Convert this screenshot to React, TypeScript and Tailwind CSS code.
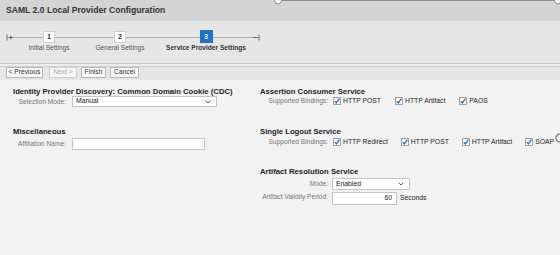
import React from "react"

const font = "font-['Liberation_Sans',Arial,sans-serif]"

function Chevron() {
  return (
    <svg width="6" height="4" viewBox="0 0 6 4" className="shrink-0">
      <path d="M0.8 0.8 L3 3 L5.2 0.8" fill="none" stroke="#555" strokeWidth="1" />
    </svg>
  )
}

function Select({ value, width, height }: { value: string; width: string; height: string }) {
  return (
    <div className={`${width} ${height} flex items-center justify-between bg-white border border-[#c4c4c4] pl-[3px] pr-[5px] text-[6.8px] text-[#222]`}>
      <span>{value}</span>
      <Chevron />
    </div>
  )
}

function Check({ label }: { label: string }) {
  return (
    <div className="flex items-center">
      <div className="w-[8px] h-[8px] bg-white border border-[#a0a0a0] flex items-center justify-center">
        <svg width="6" height="6" viewBox="0 0 6 6">
          <path d="M0.7 3.1 L2.3 4.9 L5.4 0.6" fill="none" stroke="#1a6fc9" strokeWidth="1.3" />
        </svg>
      </div>
      <span className="ml-[2px] text-[6.8px] text-[#222] whitespace-nowrap">{label}</span>
    </div>
  )
}

function Step({ n, label, active, w, ml }: { n: string; label: string; active?: boolean; w: string; ml: string }) {
  return (
    <div className={`${w} ${ml} flex flex-col items-center shrink-0`}>
      <div
        className={
          active
            ? "w-[13px] h-[13px] bg-[#1b74c5] text-white font-bold text-[6.5px] flex items-center justify-center"
            : "w-[12px] h-[12px] mt-[1px] bg-white border border-[#d2d2d2] text-[#222] font-bold text-[6.5px] flex items-center justify-center"
        }
      >
        {n}
      </div>
      <div className={`mt-[1px] leading-[8px] text-[6.6px] whitespace-nowrap ${active ? "font-bold text-[#333]" : "text-[#555]"}`}>
        {label}
      </div>
    </div>
  )
}

function Btn({ label, w, ml, disabled }: { label: string; w: string; ml: string; disabled?: boolean }) {
  return (
    <div
      className={`${w} ${ml} h-[11px] flex items-center justify-center bg-[#f7f7f7] border text-[6.7px] whitespace-nowrap ${
        disabled ? "border-[#d0d0d0] text-[#aaa]" : "border-[#b8b8b8] text-[#333]"
      }`}
    >
      {label}
    </div>
  )
}

export default function App() {
  return (
    <div className={`${font} relative w-[560px] h-[255px] overflow-hidden flex flex-col bg-[#f2f2f2]`}>
      {/* header */}
      <div className="h-[21px] bg-[#d4d4d4] flex items-center pl-[6px] text-[8.6px] font-bold text-[#333] shrink-0">
        SAML 2.0 Local Provider Configuration
      </div>

      {/* roadmap */}
      <div className="relative h-[42px] bg-[#e6e6e6] shrink-0">
        <div className="absolute left-[12px] w-[241px] top-[16px] h-px bg-[#b0b0b0]" />
        <svg className="absolute left-[6px] top-[13px]" width="7" height="7" viewBox="0 0 7 7">
          <path d="M1 0.5 V6.5" stroke="#666" strokeWidth="1" />
          <path d="M2.5 3.5 H6" stroke="#666" strokeWidth="1" />
          <path d="M4 1.8 L6.2 3.5 L4 5.2" fill="none" stroke="#666" strokeWidth="1" />
        </svg>
        <svg className="absolute left-[253px] top-[13px]" width="7" height="7" viewBox="0 0 7 7">
          <path d="M0 3.5 H5" stroke="#666" strokeWidth="1" />
          <path d="M6 0.5 V6.5" stroke="#666" strokeWidth="1" />
        </svg>
        <div className="relative flex pt-[9px]">
          <Step n="1" label="Initial Settings" w="w-[70px]" ml="ml-[14px]" />
          <Step n="2" label="General Settings" w="w-[70px]" ml="ml-[1px]" />
          <Step n="3" label="Service Provider Settings" active w="w-[70px]" ml="ml-[16px]" />
        </div>
      </div>

      {/* separator lines */}
      <div className="h-px bg-[#c6c6c6] shrink-0" />
      <div className="h-[2px] bg-[#ececec] shrink-0" />
      <div className="h-px bg-[#cfcfcf] shrink-0" />

      {/* toolbar */}
      <div className="h-[13px] bg-[#e6e6e6] flex items-start pl-[6px] shrink-0">
        <Btn label="< Previous" w="w-[37px]" ml="ml-0" />
        <Btn label="Next >" w="w-[28px]" ml="ml-[6px]" disabled />
        <Btn label="Finish" w="w-[25px]" ml="ml-[4px]" />
        <Btn label="Cancel" w="w-[29px]" ml="ml-[4px]" />
      </div>

      {/* content */}
      <div className="flex flex-1">
        <div className="w-[260px] pl-[13px] pt-[7px] shrink-0">
          <div className="h-[9px] leading-[9px] text-[7.7px] font-bold text-[#222] whitespace-nowrap">
            Identity Provider Discovery: Common Domain Cookie (CDC)
          </div>
          <div className="flex items-center h-[11px]">
            <div className="w-[53px] text-right text-[6.6px] text-[#777] whitespace-nowrap">Selection Mode:</div>
            <div className="ml-[6px]">
              <Select value="Manual" width="w-[145px]" height="h-[11px]" />
            </div>
          </div>

          <div className="mt-[20px] h-[9px] leading-[9px] text-[7.7px] font-bold text-[#222]">Miscellaneous</div>
          <div className="mt-[2px] flex items-center h-[12px]">
            <div className="w-[53px] text-right text-[6.6px] text-[#777] whitespace-nowrap">Affiliation Name:</div>
            <div className="ml-[6px] w-[133px] h-[12px] bg-white border border-[#c4c4c4]" />
          </div>
        </div>

        <div className="flex-1 pt-[7px]">
          <div className="h-[9px] leading-[9px] text-[7.7px] font-bold text-[#222]">Assertion Consumer Service</div>
          <div className="flex items-center h-[10px]">
            <div className="w-[68px] text-right text-[6.6px] text-[#777] whitespace-nowrap">Supported Bindings:</div>
            <div className="ml-[5px] flex items-center gap-[14px]">
              <Check label="HTTP POST" />
              <Check label="HTTP Artifact" />
              <Check label="PAOS" />
            </div>
          </div>

          <div className="mt-[21px] h-[9px] leading-[9px] text-[7.7px] font-bold text-[#222]">Single Logout Service</div>
          <div className="mt-[1px] flex items-center h-[10px]">
            <div className="w-[68px] text-right text-[6.6px] text-[#777] whitespace-nowrap">Supported Bindings:</div>
            <div className="ml-[5px] flex items-center gap-[13px]">
              <Check label="HTTP Redirect" />
              <Check label="HTTP POST" />
              <Check label="HTTP Artifact" />
              <Check label="SOAP" />
            </div>
          </div>

          <div className="mt-[20px] h-[9px] leading-[9px] text-[7.7px] font-bold text-[#222]">Artifact Resolution Service</div>
          <div className="mt-[2px] flex items-center h-[12px]">
            <div className="w-[68px] text-right text-[6.6px] text-[#777] whitespace-nowrap">Mode:</div>
            <div className="ml-[4px]">
              <Select value="Enabled" width="w-[78px]" height="h-[12px]" />
            </div>
          </div>
          <div className="mt-[2px] flex items-start h-[13px]">
            <div className="w-[68px] text-right text-[6.6px] text-[#777] whitespace-nowrap leading-[10px]">
              Artifact Validity Period:
            </div>
            <div className="ml-[4px] w-[65px] h-[13px] bg-white border border-[#c4c4c4] flex items-center justify-end pr-[4px] text-[6.8px] text-[#222]">
              60
            </div>
            <div className="ml-[3px] h-[13px] flex items-center text-[6.8px] text-[#222]">Seconds</div>
          </div>
        </div>
      </div>

      {/* cropped overlay outlines */}
      <svg className="absolute left-[272px] top-0 pointer-events-none" width="288" height="8" viewBox="0 0 288 8">
        <path d="M9.5 0.5 H282.5" stroke="#8f8f8f" strokeWidth="1" />
        <circle cx="6" cy="0.5" r="3.5" fill="#f2f2f2" stroke="#8f8f8f" strokeWidth="1" />
        <circle cx="286" cy="0.5" r="3.5" fill="#f2f2f2" stroke="#8f8f8f" strokeWidth="1" />
      </svg>
      <svg className="absolute left-[554px] top-[133px] pointer-events-none" width="6" height="10" viewBox="0 0 6 10">
        <path d="M6 1 A4 4 0 0 0 6 9" fill="none" stroke="#666" strokeWidth="1.2" />
      </svg>
    </div>
  )
}
